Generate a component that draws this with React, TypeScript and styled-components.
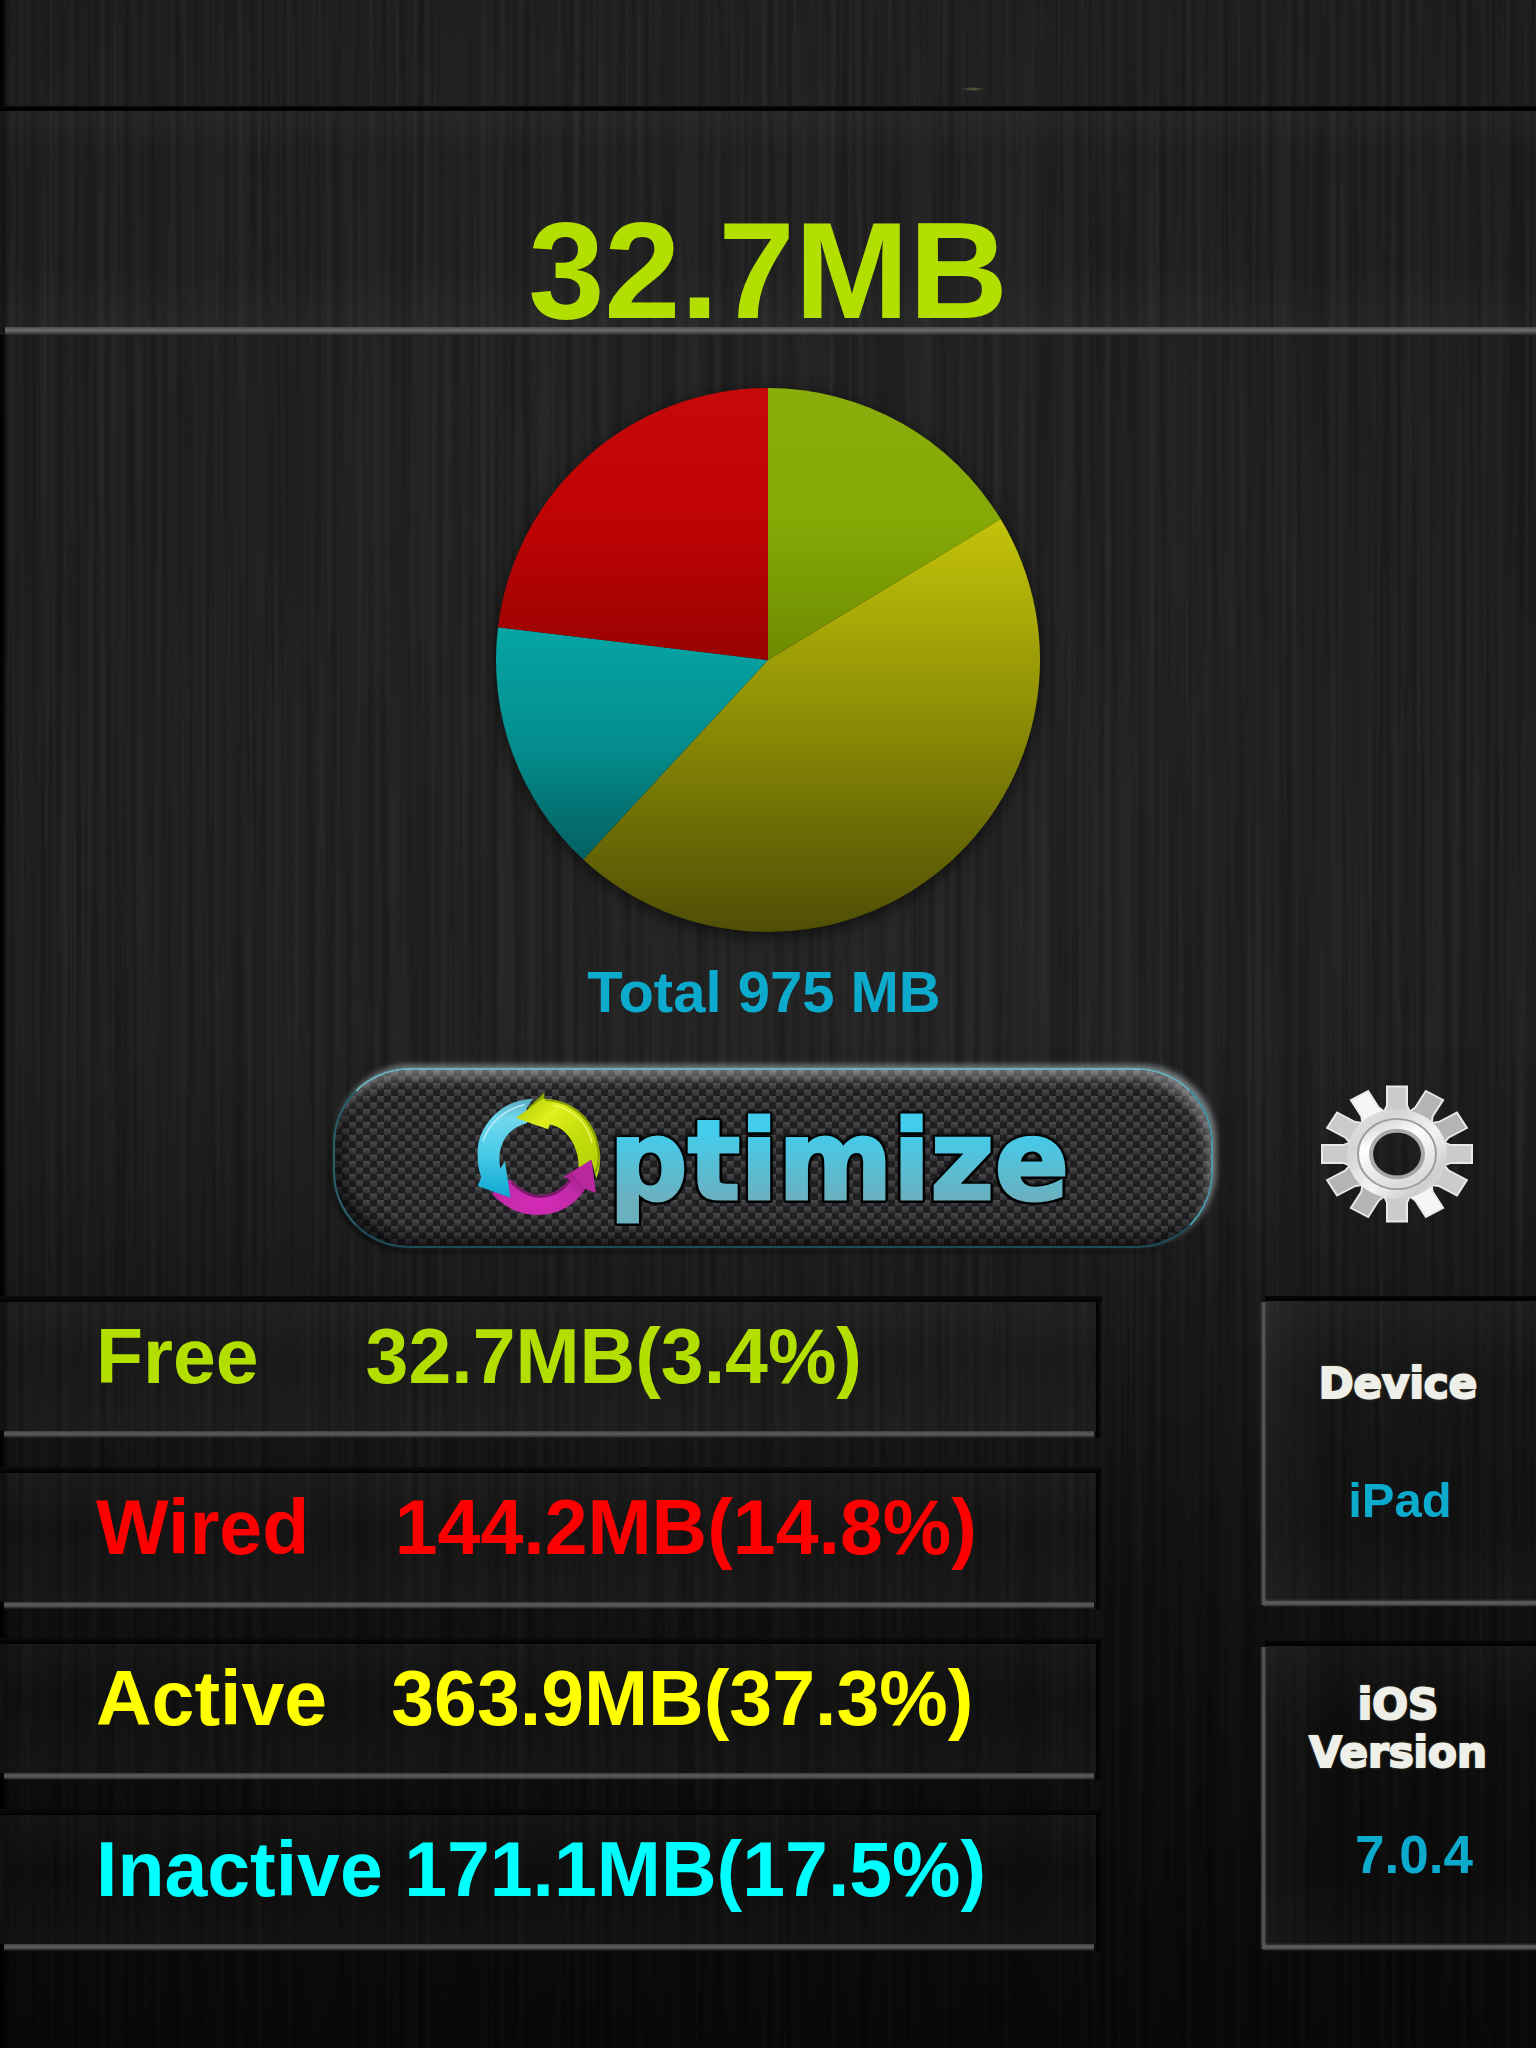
import React from 'react';
import styled, { createGlobalStyle } from 'styled-components';

const svgUrl = (markup: string) => `url("data:image/svg+xml,${encodeURIComponent(markup)}")`;

/* Vertical grain of the brushed metal plate */
const brushed = svgUrl(
  `<svg xmlns="http://www.w3.org/2000/svg" width="1536" height="2048"><filter id="n" x="0" y="0" width="100%" height="100%"><feTurbulence type="fractalNoise" baseFrequency="0.16 0.0012" numOctaves="3" seed="7" stitchTiles="stitch"/><feColorMatrix values="0 0 0 0 1  0 0 0 0 1  0 0 0 0 1  0.5 0 0 0 -0.13"/></filter><rect width="1536" height="2048" filter="url(#n)" opacity="0.2"/></svg>`,
);

/* Woven carbon cells of the main button */
const carbon = svgUrl(
  `<svg xmlns="http://www.w3.org/2000/svg" width="14" height="13"><defs><linearGradient id="c" x1="0" y1="0" x2="0" y2="1"><stop offset="0" stop-color="#4b4b4e"/><stop offset="1" stop-color="#303033"/></linearGradient></defs><rect width="14" height="13" fill="#1f1f22"/><rect width="7" height="6.5" fill="url(#c)"/><rect x="7" y="6.5" width="7" height="6.5" fill="url(#c)"/></svg>`,
);

const GlobalStyle = createGlobalStyle`
  *, *::before, *::after { box-sizing: border-box; }
  body { margin: 0; background: #090909; }
  button { font: inherit; color: inherit; border: 0; padding: 0; background: none; cursor: pointer; }
  h1, h2, p { margin: 0; font-size: inherit; font-weight: inherit; }
`;

const Page = styled.main`
  min-height: 100vh;
  padding: 106px 0 92px;
  font-family: 'Liberation Sans', Arial, Helvetica, sans-serif;
  font-weight: 700;
  background:
    linear-gradient(90deg, #000 0, rgba(0, 0, 0, 0.85) 3px, rgba(0, 0, 0, 0) 8px),
    radial-gradient(ellipse 12px 2px at 973px 89px, rgba(125, 120, 75, 0.8), rgba(120, 115, 70, 0)),
    linear-gradient(rgba(0, 0, 0, 0) 50%, rgba(0, 0, 0, 0.35) 75%, rgba(0, 0, 0, 0.6)),
    ${brushed},
    radial-gradient(ellipse 60% 60% at 50% 35%, rgba(255, 255, 255, 0.03), rgba(0, 0, 0, 0) 100%),
    linear-gradient(#181818 0%, #191919 58%, #141414 75%, #101010 100%);
`;

const Headline = styled.header`
  padding: 109px 0 8px;
  text-align: center;
  background:
    linear-gradient(#0c0c0c, #000 50%, #020202) 0 0 / 100% 5px no-repeat,
    linear-gradient(#4a4a4a, #6c6c6c 40%, #484848 75%, rgba(50, 50, 50, 0)) 5px 100% / 100% 8px no-repeat,
    linear-gradient(90deg, #1a1a1a 0, rgba(26, 26, 26, 0) 10px),
    linear-gradient(rgba(255, 250, 220, 0.035), rgba(255, 250, 220, 0) 20%, rgba(255, 250, 220, 0) 70%, rgba(255, 250, 220, 0.03));
`;

const FreeNow = styled.h1`
  font-size: 137px;
  line-height: 112px;
  color: #b2df00;
`;

const Summary = styled.section`
  display: flex;
  flex-direction: column;
  align-items: center;
  gap: 28px;
  padding-top: 53px;
`;

const Pie = styled.svg`
  display: block;
  width: 544px;
  height: 544px;
  overflow: visible;
  filter: drop-shadow(0 4px 8px rgba(0, 0, 0, 0.6));
`;

const Total = styled.p`
  padding-right: 8px;
  font-size: 58px;
  line-height: 64px;
  color: #0cabce;
`;

const Actions = styled.section`
  display: grid;
  grid-template-columns: 1260fr 276fr;
  align-items: center;
  margin-top: 44px;
`;

const OptimizeButton = styled.button`
  display: flex;
  align-items: center;
  gap: 6px;
  justify-self: end;
  width: 880px;
  height: 180px;
  margin-right: 47px;
  padding: 0 0 8px 140px;
  border: 2px solid;
  border-color: #6fb0be #4a98a8 #1b4c58 #28606c;
  border-radius: 76px;
  background: ${carbon};
  box-shadow:
    inset -5px 10px 12px -2px rgba(255, 255, 255, 0.36),
    inset 8px -8px 14px rgba(0, 0, 0, 0.6),
    3px -3px 6px rgba(190, 200, 205, 0.6),
    -2px 3px 5px rgba(0, 0, 0, 0.6);
`;

const Cycle = styled.svg`
  flex: none;
  width: 128px;
  height: 127px;
`;

const Wordmark = styled.span`
  padding-top: 14px;
  font-family: 'DejaVu Sans', Verdana, sans-serif;
  font-size: 110px;
  font-weight: 700;
  line-height: 128px;
  color: transparent;
  background: linear-gradient(#42cdec 34%, #6bb0bf 82%);
  -webkit-background-clip: text;
  background-clip: text;
  -webkit-text-stroke: 3px transparent;
  filter: drop-shadow(2px 0 0 #000) drop-shadow(-2px 0 0 #000) drop-shadow(0 2px 0 #000) drop-shadow(0 -2px 1px #000);
`;

const SettingsButton = styled.button`
  justify-self: center;
  line-height: 0;
`;

const Details = styled.section`
  display: grid;
  grid-template-columns: 1102fr 276fr;
  column-gap: 158px;
  margin-top: 48px;
`;

const Rows = styled.div`
  display: flex;
  flex-direction: column;
  gap: 29px;
`;

const Row = styled.p<{ $color: string }>`
  padding: 16px 0 38px 96px;
  font-size: 77px;
  line-height: 88px;
  white-space: pre;
  color: ${(p) => p.$color};
  background:
    linear-gradient(#0c0c0c, #020202) 0 0 / 100% 6px no-repeat,
    linear-gradient(90deg, #020202 1px, rgba(4, 4, 4, 0.7) 4px, rgba(0, 0, 0, 0)) 100% 0 / 6px 100% no-repeat,
    linear-gradient(#3c3c3c, #5e5e5e 40%, #444 70%, rgba(40, 40, 40, 0)) 4px 100% / calc(100% - 12px) 7px no-repeat,
    linear-gradient(90deg, #131312 0, rgba(19, 19, 18, 0) 10px) 0 0 / 100% calc(100% - 7px) no-repeat,
    linear-gradient(rgba(255, 250, 225, 0.04), rgba(255, 250, 225, 0.01) 45%, rgba(255, 250, 225, 0.035)) 0 0 / calc(100% - 6px) calc(100% - 7px) no-repeat;
`;

const Side = styled.div`
  display: flex;
  flex-direction: column;
  gap: 34px;
`;

const InfoPanel = styled.section`
  display: flex;
  flex: 1;
  flex-direction: column;
  align-items: center;
  background:
    linear-gradient(90deg, rgba(70, 70, 70, 0), #525252 40%, #585858 60%, rgba(60, 60, 60, 0)) 0 6px / 7px calc(100% - 8px) no-repeat,
    linear-gradient(rgba(60, 60, 60, 0), #606060 40%, #505050 70%, rgba(40, 40, 40, 0)) 3px 100% / 100% 8px no-repeat,
    linear-gradient(#060606, #000) 5px 0 / 100% 5px no-repeat,
    linear-gradient(90deg, rgba(255, 240, 200, 0.04), rgba(255, 240, 200, 0) 20%) 6px 5px / 100% calc(100% - 12px) no-repeat,
    linear-gradient(rgba(255, 250, 225, 0.035), rgba(255, 250, 225, 0.005) 25%, rgba(255, 250, 225, 0.005) 75%, rgba(255, 250, 225, 0.03)) 6px 5px / 100% calc(100% - 12px) no-repeat;
`;

const InfoTitle = styled.h2`
  padding-top: 64px;
  font-family: 'DejaVu Sans', Verdana, sans-serif;
  font-size: 42px;
  font-weight: 700;
  line-height: 48px;
  text-align: center;
  color: #efefea;
  -webkit-text-stroke: 2px #efefea;
  text-shadow: 0 0 3px rgba(200, 200, 130, 0.8);
`;

const VersionTitle = styled(InfoTitle)`
  padding-top: 40px;
`;

const DeviceName = styled.p`
  padding: 64px 0 0 4px;
  font-size: 49px;
  line-height: 56px;
  color: #0cabce;
`;

const VersionNumber = styled.p`
  padding: 48px 0 0 32px;
  font-size: 53px;
  line-height: 60px;
  color: #0cabce;
`;

interface Slice {
  name: string;
  from: number;
  to: number;
  stops: [string, string, string];
}

const slices: Slice[] = [
  { name: 'free', from: 0, to: 58.8, stops: ['#8aad0c', '#84a805', '#6e8a02'] },
  { name: 'active', from: 58.8, to: 222.8, stops: ['#c4c30a', '#8a8b05', '#4f4e06'] },
  { name: 'inactive', from: 222.8, to: 276.9, stops: ['#06a5a4', '#048e8e', '#045f61'] },
  { name: 'wired', from: 276.9, to: 360, stops: ['#c60909', '#be0304', '#990202'] },
];

const rim = (deg: number) => {
  const a = (deg * Math.PI) / 180;
  return `${(272 + 272 * Math.sin(a)).toFixed(2)} ${(272 - 272 * Math.cos(a)).toFixed(2)}`;
};

const MemoryPie = () => (
  <Pie viewBox="0 0 544 544" role="img" aria-label="Memory usage">
    <defs>
      {slices.map((s) => (
        <linearGradient key={s.name} id={`slice-${s.name}`} x1="0" y1="0" x2="0" y2="1">
          <stop offset="0" stopColor={s.stops[0]} />
          <stop offset="0.5" stopColor={s.stops[1]} />
          <stop offset="1" stopColor={s.stops[2]} />
        </linearGradient>
      ))}
    </defs>
    {slices.map((s) => (
      <path
        key={s.name}
        fill={`url(#slice-${s.name})`}
        d={`M272 272 L${rim(s.from)} A272 272 0 ${s.to - s.from > 180 ? 1 : 0} 1 ${rim(s.to)} Z`}
      />
    ))}
  </Pie>
);

const CycleLogo = () => (
  <Cycle viewBox="465 150 385 380" aria-hidden="true">
    <defs>
      <linearGradient id="cyc-blue" x1="0" y1="0" x2="0" y2="1">
        <stop offset="0" stopColor="#5aa9c0" />
        <stop offset="0.2" stopColor="#6fd8ee" />
        <stop offset="0.6" stopColor="#45c8e6" />
        <stop offset="1" stopColor="#0ca6d2" />
      </linearGradient>
      <linearGradient id="cyc-lime" x1="0" y1="0" x2="1" y2="1">
        <stop offset="0" stopColor="#a8c400" />
        <stop offset="0.3" stopColor="#e0f01c" />
        <stop offset="0.6" stopColor="#c3dd0c" />
        <stop offset="1" stopColor="#b4cf06" />
      </linearGradient>
      <radialGradient id="cyc-pink" cx="0.45" cy="0.75" r="0.6">
        <stop offset="0" stopColor="#d62bbb" />
        <stop offset="0.6" stopColor="#c22aa8" />
        <stop offset="1" stopColor="#a3208c" />
      </radialGradient>
    </defs>
    <path
      fill="url(#cyc-pink)"
      d="M515 458 C560 505 605 522 657 522 C720 520 768 490 797 443 L828 455 L815 356 L730 408 L748 414 C725 450 690 463 657 462 C625 460 600 445 570 415 Z"
    />
    <path fill="none" stroke="#7d1a6c" strokeWidth="9" d="M575 424 C600 449 625 464 657 466 C690 467 725 453 750 418" />
    <path
      fill="url(#cyc-blue)"
      d="M640 172 C550 172 475 250 473 330 C472 360 475 385 484 408 L473 435 L572 470 L555 360 L541 382 C530 320 555 262 622 245 L620 200 Z"
    />
    <path fill="none" stroke="#c4f1fb" strokeWidth="5" opacity="0.8" d="M614 190 C550 205 505 250 489 300" />
    <path fill="#8ba300" d="M622 202 L673 154 L675 185 Z" />
    <path
      fill="url(#cyc-lime)"
      d="M668 172 L588 230 L685 264 L690 250 C738 258 777 310 777 380 L815 356 L830 412 C842 385 843 350 838 320 C825 230 755 172 668 172 Z"
    />
    <path fill="none" stroke="#8a9f00" strokeWidth="6" d="M826 396 C838 370 840 345 835 320 C822 235 755 178 676 175" />
    <path fill="none" stroke="#eefa6a" strokeWidth="5" opacity="0.8" d="M700 192 C765 205 805 250 817 305" />
    <path fill="#b9289f" d="M797 443 L828 455 L815 356 L755 394 Z" />
  </Cycle>
);

const teeth = Array.from({ length: 12 }, (_, i) => i * 30);

const Gear = () => (
  <svg width="160" height="160" viewBox="-79 -76 160 160" aria-hidden="true">
    <defs>
      <linearGradient id="gear-body" x1="-60" y1="-60" x2="60" y2="60" gradientUnits="userSpaceOnUse">
        <stop offset="0" stopColor="#f2f2f2" />
        <stop offset="0.3" stopColor="#d4d4d4" />
        <stop offset="0.55" stopColor="#f4f4f4" />
        <stop offset="0.75" stopColor="#cfcfcf" />
        <stop offset="1" stopColor="#ececec" />
      </linearGradient>
      <linearGradient id="gear-ring" x1="0" y1="0" x2="0.4" y2="1">
        <stop offset="0" stopColor="#c2c2c2" />
        <stop offset="0.4" stopColor="#ffffff" />
        <stop offset="1" stopColor="#dadada" />
      </linearGradient>
    </defs>
    <g transform="scale(1 0.9)">
      <mask id="gear-hole">
        <rect x="-80" y="-80" width="160" height="160" fill="#fff" />
        <circle r="24" fill="#000" />
      </mask>
      <g mask="url(#gear-hole)">
        {teeth.map((deg) => (
          <g key={deg} transform={`rotate(${deg})`}>
            <path
              d="M-14 -44 L-10 -54 V-75 H10 V-54 L14 -44 Z"
              fill={deg === 330 || deg === 150 ? '#f6f6f6' : deg === 30 || deg === 60 || deg === 210 || deg === 240 ? '#b4b4b4' : '#cbcbcb'}
              stroke="#e9e9e9"
              strokeWidth="2"
            />
          </g>
        ))}
        <circle r="50" fill="url(#gear-body)" />
        <circle r="39" fill="url(#gear-ring)" stroke="#9c9c9c" strokeWidth="2" />
        <circle r="26" fill="none" stroke="#7b7b7b" strokeWidth="4" opacity="0.6" />
      </g>
    </g>
  </svg>
);

const rows = [
  { text: 'Free     32.7MB(3.4%)', color: '#b2df00' },
  { text: 'Wired    144.2MB(14.8%)', color: '#ff0000' },
  { text: 'Active   363.9MB(37.3%)', color: '#ffff00' },
  { text: 'Inactive 171.1MB(17.5%)', color: '#00ffff' },
];

export default function App() {
  return (
    <>
      <GlobalStyle />
      <Page>
        <Headline>
          <FreeNow>32.7MB</FreeNow>
        </Headline>
        <Summary>
          <MemoryPie />
          <Total>Total 975 MB</Total>
        </Summary>
        <Actions>
          <OptimizeButton type="button" aria-label="Optimize">
            <CycleLogo />
            <Wordmark>ptimize</Wordmark>
          </OptimizeButton>
          <SettingsButton type="button" aria-label="Settings">
            <Gear />
          </SettingsButton>
        </Actions>
        <Details>
          <Rows>
            {rows.map((r) => (
              <Row key={r.text} $color={r.color}>
                {r.text}
              </Row>
            ))}
          </Rows>
          <Side>
            <InfoPanel>
              <InfoTitle>Device</InfoTitle>
              <DeviceName>iPad</DeviceName>
            </InfoPanel>
            <InfoPanel>
              <VersionTitle>
                iOS
                <br />
                Version
              </VersionTitle>
              <VersionNumber>7.0.4</VersionNumber>
            </InfoPanel>
          </Side>
        </Details>
      </Page>
    </>
  );
}
